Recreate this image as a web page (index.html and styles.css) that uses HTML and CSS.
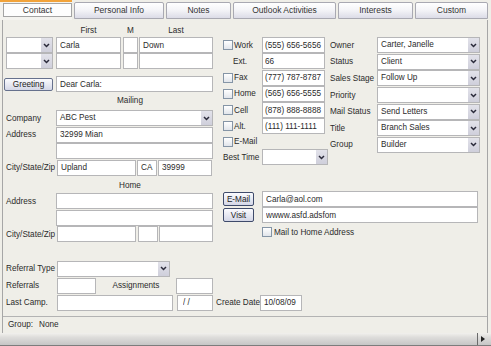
FILE: index.html
```html
<!DOCTYPE html>
<html lang="en">
<head>
    <meta charset="UTF-8">
    <title>Contact</title>
    <link rel="stylesheet" href="styles.css">
</head>
<body>
<div class="window">
    <ul class="tabs">
        <li class="tab tab-active"><span>Contact</span></li>
        <li class="tab tab-personal">Personal Info</li>
        <li class="tab tab-notes">Notes</li>
        <li class="tab tab-outlook">Outlook Activities</li>
        <li class="tab tab-interests">Interests</li>
        <li class="tab tab-custom">Custom</li>
    </ul>

    <div class="panel">
        <div class="form">
            <!-- upper block: name / mailing, phones, status -->
            <div class="block">
                <div class="col-left">
                    <div class="name-head">
                        <span class="head-first">First</span>
                        <span class="head-m">M</span>
                        <span class="head-last">Last</span>
                    </div>
                    <div class="row row-name">
                        <div class="combo w-prefix"><span class="combo-val"></span><span class="combo-btn"><svg width="7" height="5" viewBox="0 0 7 5"><path d="M1 1l2.5 2.5L6 1" fill="none" stroke="#2a2a3a" stroke-width="1.5"/></svg></span></div>
                        <input class="field w-first" value="Carla">
                        <input class="field w-m" value="">
                        <input class="field w-last" value="Down">
                    </div>
                    <div class="row row-name">
                        <div class="combo w-prefix"><span class="combo-val"></span><span class="combo-btn"><svg width="7" height="5" viewBox="0 0 7 5"><path d="M1 1l2.5 2.5L6 1" fill="none" stroke="#2a2a3a" stroke-width="1.5"/></svg></span></div>
                        <input class="field w-first" value="">
                        <input class="field w-m" value="">
                        <input class="field w-last" value="">
                    </div>
                    <div class="row row-greet">
                        <button class="btn btn-greet">Greeting</button>
                        <input class="field w-wide" value="Dear Carla:">
                    </div>

                    <div class="section-head">Mailing</div>
                    <div class="row">
                        <span class="lbl">Company</span>
                        <div class="combo w-wide"><span class="combo-val">ABC Pest</span><span class="combo-btn"><svg width="7" height="5" viewBox="0 0 7 5"><path d="M1 1l2.5 2.5L6 1" fill="none" stroke="#2a2a3a" stroke-width="1.5"/></svg></span></div>
                    </div>
                    <div class="row">
                        <span class="lbl">Address</span>
                        <input class="field w-wide" value="32999 Mian">
                    </div>
                    <div class="row">
                        <span class="lbl"></span>
                        <input class="field w-wide" value="">
                    </div>
                    <div class="row">
                        <span class="lbl">City/State/Zip</span>
                        <input class="field w-city" value="Upland">
                        <input class="field w-state" value="CA">
                        <input class="field w-zip" value="39999">
                    </div>
                </div>

                <div class="col-mid">
                    <div class="row row-phone">
                        <label class="chk-cell"><span class="chk"></span>Work</label>
                        <input class="field w-phone" value="(555) 656-5656">
                    </div>
                    <div class="row row-phone">
                        <span class="chk-cell chk-indent">Ext.</span>
                        <input class="field w-phone" value="66">
                    </div>
                    <div class="row row-phone">
                        <label class="chk-cell"><span class="chk"></span>Fax</label>
                        <input class="field w-phone" value="(777) 787-8787">
                    </div>
                    <div class="row row-phone">
                        <label class="chk-cell"><span class="chk"></span>Home</label>
                        <input class="field w-phone" value="(565) 656-5555">
                    </div>
                    <div class="row row-phone">
                        <label class="chk-cell"><span class="chk"></span>Cell</label>
                        <input class="field w-phone" value="(878) 888-8888">
                    </div>
                    <div class="row row-phone">
                        <label class="chk-cell"><span class="chk"></span>Alt.</label>
                        <input class="field w-phone" value="(111) 111-1111">
                    </div>
                    <div class="row row-email">
                        <label class="chk-cell"><span class="chk"></span>E-Mail</label>
                    </div>
                    <div class="row row-best">
                        <span class="chk-cell">Best Time</span>
                        <div class="combo w-best"><span class="combo-val"></span><span class="combo-btn"><svg width="7" height="5" viewBox="0 0 7 5"><path d="M1 1l2.5 2.5L6 1" fill="none" stroke="#2a2a3a" stroke-width="1.5"/></svg></span></div>
                    </div>
                </div>

                <div class="col-right">
                    <div class="row row-status">
                        <span class="lbl-r">Owner</span>
                        <div class="combo w-status"><span class="combo-val">Carter, Janelle</span><span class="combo-btn"><svg width="7" height="5" viewBox="0 0 7 5"><path d="M1 1l2.5 2.5L6 1" fill="none" stroke="#2a2a3a" stroke-width="1.5"/></svg></span></div>
                    </div>
                    <div class="row row-status">
                        <span class="lbl-r">Status</span>
                        <div class="combo w-status"><span class="combo-val">Client</span><span class="combo-btn"><svg width="7" height="5" viewBox="0 0 7 5"><path d="M1 1l2.5 2.5L6 1" fill="none" stroke="#2a2a3a" stroke-width="1.5"/></svg></span></div>
                    </div>
                    <div class="row row-status">
                        <span class="lbl-r">Sales Stage</span>
                        <div class="combo w-status"><span class="combo-val">Follow Up</span><span class="combo-btn"><svg width="7" height="5" viewBox="0 0 7 5"><path d="M1 1l2.5 2.5L6 1" fill="none" stroke="#2a2a3a" stroke-width="1.5"/></svg></span></div>
                    </div>
                    <div class="row row-status">
                        <span class="lbl-r">Priority</span>
                        <div class="combo w-status"><span class="combo-val"></span><span class="combo-btn"><svg width="7" height="5" viewBox="0 0 7 5"><path d="M1 1l2.5 2.5L6 1" fill="none" stroke="#2a2a3a" stroke-width="1.5"/></svg></span></div>
                    </div>
                    <div class="row row-status">
                        <span class="lbl-r">Mail Status</span>
                        <div class="combo w-status"><span class="combo-val">Send Letters</span><span class="combo-btn"><svg width="7" height="5" viewBox="0 0 7 5"><path d="M1 1l2.5 2.5L6 1" fill="none" stroke="#2a2a3a" stroke-width="1.5"/></svg></span></div>
                    </div>
                    <div class="row row-status">
                        <span class="lbl-r">Title</span>
                        <div class="combo w-status"><span class="combo-val">Branch Sales</span><span class="combo-btn"><svg width="7" height="5" viewBox="0 0 7 5"><path d="M1 1l2.5 2.5L6 1" fill="none" stroke="#2a2a3a" stroke-width="1.5"/></svg></span></div>
                    </div>
                    <div class="row row-status">
                        <span class="lbl-r">Group</span>
                        <div class="combo w-status"><span class="combo-val">Builder</span><span class="combo-btn"><svg width="7" height="5" viewBox="0 0 7 5"><path d="M1 1l2.5 2.5L6 1" fill="none" stroke="#2a2a3a" stroke-width="1.5"/></svg></span></div>
                    </div>
                </div>
            </div>

            <!-- lower block: home address, referrals, web links -->
            <div class="block">
                <div class="col-left">
                    <div class="section-head section-home">Home</div>
                    <div class="row">
                        <span class="lbl">Address</span>
                        <input class="field w-wide" value="">
                    </div>
                    <div class="row">
                        <span class="lbl"></span>
                        <input class="field w-wide" value="">
                    </div>
                    <div class="row">
                        <span class="lbl">City/State/Zip</span>
                        <input class="field w-city" value="">
                        <input class="field w-state w-state-home" value="">
                        <input class="field w-zip" value="">
                    </div>

                    <div class="row row-ref row-ref-first">
                        <span class="lbl">Referral Type</span>
                        <div class="combo w-reftype"><span class="combo-val"></span><span class="combo-btn"><svg width="7" height="5" viewBox="0 0 7 5"><path d="M1 1l2.5 2.5L6 1" fill="none" stroke="#2a2a3a" stroke-width="1.5"/></svg></span></div>
                    </div>
                    <div class="row row-ref">
                        <span class="lbl">Referrals</span>
                        <input class="field w-referrals" value="">
                        <span class="lbl-mid">Assignments</span>
                        <input class="field w-assign" value="">
                    </div>
                    <div class="row row-ref">
                        <span class="lbl">Last Camp.</span>
                        <input class="field w-camp" value="">
                        <input class="field w-campdate" value="/ /">
                        <span class="lbl-create">Create Date</span>
                        <input class="field w-created" value="10/08/09">
                    </div>
                </div>

                <div class="col-links">
                    <div class="row row-link">
                        <button class="btn btn-link">E-Mail</button>
                        <input class="field w-link" value="Carla@aol.com">
                    </div>
                    <div class="row row-link">
                        <button class="btn btn-link">Visit</button>
                        <input class="field w-link" value="wwww.asfd.adsfom">
                    </div>
                    <label class="row row-mailhome"><span class="chk"></span>Mail to Home Address</label>
                </div>
            </div>
        </div>

        <div class="status">
            <span class="status-key">Group:</span>None
        </div>
    </div>

    <div class="hscroll">
        <span class="hscroll-btn"><svg width="4" height="6" viewBox="0 0 4 6"><path d="M0 0L4 3L0 6Z" fill="#222"/></svg></span>
    </div>
</div>
</body>
</html>
```

FILE: styles.css
```css
/* Basic reset */
* {
    margin: 0;
    padding: 0;
    box-sizing: border-box;
}

:root {
    --panel: #efeee8;
    --field-border: #b6b6b8;
    --text: #2b2b2b;
}

body {
    font-family: "Liberation Sans", Arial, sans-serif;
    font-size: 8.2px;
    color: var(--text);
    background: var(--panel);
}

.window {
    width: 491px;
    height: 346px;
    overflow: hidden;
    background: var(--panel);
}

/* Tabs */
.tabs {
    display: flex;
    gap: 2px;
    height: 20px;
    list-style: none;
    font-size: 8.5px;
}

.tab {
    flex-shrink: 0;
    margin-top: 2px;
    height: 17px;
    border: 1px solid #a9a9b2;
    border-radius: 2px 2px 0 0;
    background: linear-gradient(#ffffff, #f5f5f8 45%, #dcdce7);
    text-align: center;
    line-height: 15px;
    color: #333;
}

.tab-active {
    width: 72px;
    height: 20px;
    margin-top: 0;
    padding: 1px 0 0 3px;
    border: none;
    border-top: 2px solid #f2a33a;
    border-radius: 0;
    background: #f4f3ef;
}

.tab-active span {
    display: block;
    width: 69px;
    height: 14px;
    border: 1px solid #a4a4a4;
    background: #fdfdfd;
    line-height: 12px;
}

.tab-personal { width: 90px; }
.tab-notes { width: 65px; }
.tab-outlook { width: 103px; }
.tab-interests { width: 75px; }
.tab-custom { width: 73px; }

/* Panel */
.panel {
    margin-left: 2px;
    width: 486px;
    height: 313px;
    border-left: 1px solid #a6a6a6;
    border-right: 1px solid #a6a6a6;
    background: var(--panel);
}

.form {
    height: 296px;
    padding: 5px 0 0 3px;
}

.block {
    display: flex;
}

.col-left {
    width: 207px;
    flex-shrink: 0;
}

.col-mid {
    width: 105px;
    margin-left: 10px;
    margin-top: 12px;
}

.col-right {
    width: 150px;
    margin-left: 2px;
    margin-top: 12px;
}

.col-links {
    width: 256px;
    margin-left: 10px;
    margin-top: 15px;
}

/* Rows and labels */
.row {
    display: flex;
    align-items: center;
    height: 16.5px;
    white-space: nowrap;
}

.lbl {
    width: 50px;
    flex-shrink: 0;
}

.lbl-r {
    width: 47px;
    flex-shrink: 0;
}

.lbl-mid {
    width: 80px;
    flex-shrink: 0;
    text-align: center;
}

.lbl-create {
    width: 44px;
    margin-left: 3px;
    flex-shrink: 0;
}

.name-head {
    display: flex;
    height: 12px;
    line-height: 12px;
    padding-left: 50px;
}

.name-head span {
    text-align: center;
}

.head-first { width: 65px; }
.head-m { width: 15px; margin-left: 2px; }
.head-last { width: 74px; margin-left: 1px; }

.row-name { height: 16px; }

.row-greet {
    height: 16px;
    margin-top: 7px;
}

.section-head {
    height: 18px;
    line-height: 18px;
    padding-left: 41px;
    text-align: center;
}

.section-home {
    height: 17px;
    line-height: 20px;
}

.row-ref { height: 17px; }
.row-ref-first { margin-top: 17.5px; }

.row-phone { height: 16.25px; }
.row-email { height: 14.5px; }
.row-best { height: 16px; }
.row-status { height: 16.6px; }
.row-link { height: 16px; }

/* Inputs */
.field {
    flex-shrink: 0;
    height: 16px;
    padding: 0 0 0 3px;
    border: 1px solid var(--field-border);
    border-radius: 0;
    background: #fff;
    font: inherit;
    color: var(--text);
    outline: none;
}

.w-first { width: 65px; margin-left: 3px; }
.w-m { width: 15px; margin-left: 2px; }
.w-last { width: 74px; margin-left: 1px; }
.w-wide { width: 157px; }
.row-greet .w-wide { margin-left: 3px; }
.w-city { width: 79px; margin-left: 1px; }
.w-state { width: 20px; margin-left: 1px; }
.w-state-home { margin-left: 2px; }
.w-zip { width: 54px; margin-left: 1px; }
.w-phone { width: 63px; padding-left: 2px; }
.w-referrals { width: 39px; margin-left: 1px; }
.w-assign { width: 37px; }
.w-camp { width: 116px; margin-left: 1px; }
.w-campdate { width: 36px; margin-left: 4px; padding-left: 5px; }
.w-created { width: 42px; }
.w-link { width: 216px; margin-left: 8px; }

/* Combo boxes */
.combo {
    display: flex;
    flex-shrink: 0;
    height: 16px;
    border: 1px solid var(--field-border);
    background: #fff;
}

.combo-val {
    flex: 1;
    padding-left: 3px;
    line-height: 14px;
    overflow: hidden;
}

.combo-btn {
    width: 11px;
    display: flex;
    align-items: center;
    justify-content: center;
    background: linear-gradient(#e2e2ea, #cfcfdb);
}

.w-prefix { width: 47px; }
.w-best { width: 66px; }
.w-status { width: 103px; }
.w-reftype { width: 113px; margin-left: 1px; }

/* Buttons */
.btn {
    flex-shrink: 0;
    height: 13px;
    padding: 0;
    border: 1px solid #66718d;
    border-radius: 2px;
    background: linear-gradient(#fbfbfe, #d4d7e7);
    font: inherit;
    color: #222;
    line-height: 11px;
}

.btn-greet {
    width: 49px;
    margin-left: -2px;
}

.btn-link {
    width: 31px;
    height: 14px;
    border-color: #3f4b6b;
}

/* Checkboxes */
.chk-cell {
    display: flex;
    align-items: center;
    width: 39px;
    flex-shrink: 0;
}

.chk-indent {
    padding-left: 10px;
}

.chk {
    width: 10px;
    height: 10px;
    margin-right: 1px;
    flex-shrink: 0;
    border: 1px solid #8595a6;
    background: linear-gradient(#ffffff, #e1e5eb);
}

.row-mailhome {
    height: 16px;
    margin-top: 1px;
    padding-left: 39px;
}

.row-mailhome .chk {
    margin-right: 2px;
}

/* Status line */
.status {
    height: 17px;
    padding-left: 5px;
    border-top: 1px solid #b3b3b3;
    line-height: 16px;
}

.status-key {
    margin-right: 6px;
}

/* Horizontal scrollbar */
.hscroll {
    display: flex;
    justify-content: flex-end;
    height: 13px;
    padding-right: 4px;
    border-bottom: 1px solid #7d7d7d;
    background: linear-gradient(#f1f0ed, #dedddb 35%, #c6c6c6);
}

.hscroll-btn {
    width: 10px;
    display: flex;
    align-items: center;
    justify-content: center;
    border-left: 1px solid #6a6a6a;
}
```
